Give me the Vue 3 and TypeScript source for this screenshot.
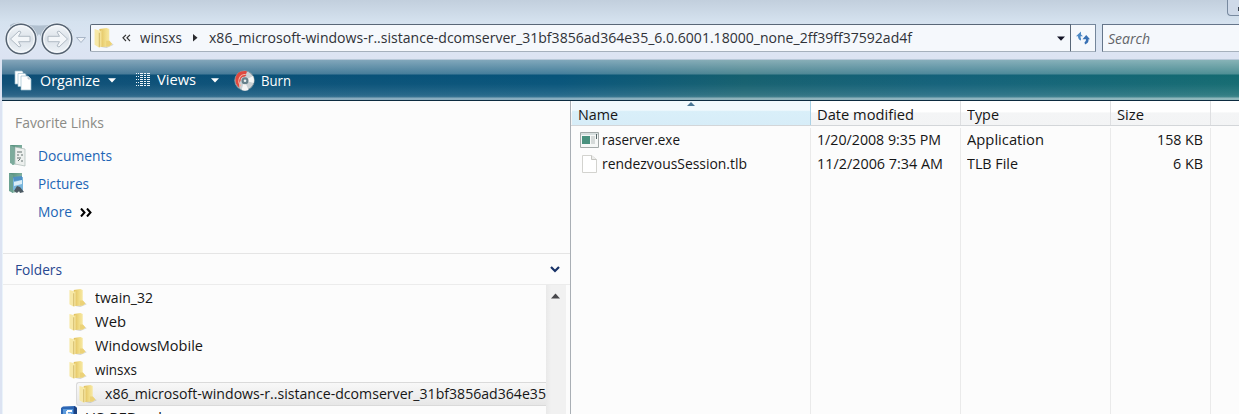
<script setup lang="ts">
import { ref } from 'vue'

// Condenses a label horizontally to the given width in pixels.
const vFit = {
  mounted(el: HTMLElement, binding: { value: number }) {
    const natural = el.getBoundingClientRect().width
    if (!natural) return
    el.style.transform = `scaleX(${binding.value / natural})`
    el.style.marginRight = `${binding.value - natural}px`
  },
}

const folders = ref([
  { name: 'twain_32', width: 58 },
  { name: 'Web', width: 31 },
  { name: 'WindowsMobile', width: 108 },
  { name: 'winsxs', width: 42 },
])

const files = ref([
  { name: 'raserver.exe', nw: 78, date: '1/20/2008 9:35 PM', dw: 124, type: 'Application', tw: 77, size: '158 KB', sw: 46, exe: true },
  { name: 'rendezvousSession.tlb', nw: 145, date: '11/2/2006 7:34 AM', dw: 126, type: 'TLB File', tw: 51, size: '6 KB', sw: 30, exe: false },
])
</script>

<template>
  <div class="window">
    <svg class="defs" width="0" height="0">
      <defs>
        <linearGradient id="gold" x1="0" x2="1"><stop offset="0" stop-color="#e0bf5c" /><stop offset=".5" stop-color="#f2de8a" /><stop offset="1" stop-color="#faf0bc" /></linearGradient>
        <linearGradient id="gold2" x1="0" x2="1"><stop offset="0" stop-color="#fcf2b8" /><stop offset="1" stop-color="#e8cb6c" /></linearGradient>
        <linearGradient id="ring" x2="0" y2="1"><stop offset="0" stop-color="#f3f6f9" /><stop offset=".5" stop-color="#dbe2e9" /><stop offset="1" stop-color="#eef3f8" /></linearGradient>
        <linearGradient id="green" x2="1" y2="1"><stop offset="0" stop-color="#4f8a78" /><stop offset="1" stop-color="#a8cfc0" /></linearGradient>
        <symbol id="folder" viewBox="0 0 20 20">
          <path d="M5 18 15 13 19.700 16.500 13 19.500Z" fill="#8c8c86" opacity=".35" />
          <path d="M6 1.500 13 .500 15.500 1.500v11l3 3.500-3 2-7.500.500Z" fill="url(#gold)" />
          <path d="M12.500 12.500h3.200l2.600 3.300-2.800 2-3 .2Z" fill="#ecd278" />
          <path d="M1.500 1.500 6.500 3l1 15.300L6 19.200 1.500 16.500Z" fill="#f7e8a6" />
          <path d="M5.800 4 8.500 2.500 9 17l-3.200 2.200Z" fill="url(#gold2)" />
          <path d="M6 5v13.500" stroke="#b99739" stroke-width=".6" />
        </symbol>
      </defs>
    </svg>

    <header class="titlebar"><span class="caption-button"><i></i></span></header>

    <nav class="nav">
      <svg class="travel" width="90" height="36" viewBox="0 0 90 36">
        <path d="M10 4Q16 0 24 3Q39 6 54 3Q64 0 72 10L66 24 46 21 39 13 32 21 10 24Z" fill="#9caebd" opacity=".65" />
        <g v-for="x in [21, 57]" :key="x">
          <circle :cx="x" cy="18" r="16" fill="none" stroke="#edf3f9" stroke-width="1" />
          <circle :cx="x" cy="18" r="14.800" fill="url(#ring)" stroke="#566372" stroke-width="1.500" />
          <circle :cx="x" cy="18" r="13.200" fill="none" stroke="#f8fafc" stroke-width="1" />
        </g>
        <path d="M10.500 18 19 10l2 1-2.500 4.300H30v5.400H18.500L21 25l-2 1Z" fill="#f3f6f9" stroke="#b0bac4" />
        <path d="M67.500 18 59 10l-2 1 2.500 4.300H48v5.400h11.500L57 25l2 1Z" fill="#f3f6f9" stroke="#b0bac4" />
        <path d="M76.500 16.500h9l-4.500 5Z" fill="#eef2f8" stroke="#a9b6c7" />
      </svg>
      <div class="address">
        <svg class="addr-folder" width="21" height="22"><use href="#folder" width="21" height="22" /></svg>
        <svg class="chevrons" width="9" height="8"><path d="m4 .8-3 3L4 7M8 .8l-3 3L8 7" fill="none" stroke="#333" stroke-width="1.200" /></svg>
        <span v-fit="42" class="label crumb">winsxs</span>
        <svg class="crumb-arrow" width="5" height="8"><path d="m0 0 4.500 3.800L0 7.600Z" fill="#2a2a2e" /></svg>
        <span v-fit="703" class="label crumb">x86_microsoft-windows-r..sistance-dcomserver_31bf3856ad364e35_6.0.6001.18000_none_2ff39ff37592ad4f</span>
        <svg class="drop" width="8" height="5"><path d="M0 .5h8L4 4.700Z" fill="#121225" /></svg>
      </div>
      <div class="refresh">
        <svg width="14" height="14" viewBox="0 0 14 14">
          <path d="M5 .500 0 5.200h2Q2 8.500 5 9.500V7.500Q4.300 6.500 4.600 5.200H7L5 3.500Z" fill="#4d89c5" />
          <path d="M9 13.500Q13 12 12.500 8.300H14L10.200 4 6.500 8.300H10q.3 2-1.500 3Z" fill="#3971b4" />
        </svg>
      </div>
      <div class="search"><span v-fit="42" class="label">Search</span></div>
    </nav>

    <div class="toolbar">
      <div class="tool organize">
        <svg width="19" height="21" viewBox="0 0 19 21">
          <g fill="#fff" stroke="#9fc0d0" stroke-width=".7"><path d="M1 1h7l1 1v12H1Z" /><path d="M4 3.500h7l1 1v12H4Z" /><path d="M7 6h7l3 3v11H7Z" /></g>
          <path d="M14 6v3h3" fill="#d6e0e6" stroke="#9fb4bf" stroke-width=".6" />
        </svg>
        <span v-fit="60" class="label">Organize</span>
        <svg class="tool-arrow" width="8" height="5"><path d="M0 .3h8L4 4.600Z" fill="#fff" /></svg>
      </div>
      <div class="tool views">
        <svg width="14" height="14" viewBox="0 0 14 14" fill="#eef6fa"><path d="M0 0h1v1H0zM0 3h1v1H0zM0 6h1v1H0zM0 9h1v1H0zM0 12h1v1H0zM2 0h1v1H2zM2 3h1v1H2zM2 6h1v1H2zM2 9h1v1H2zM2 12h1v1H2z" /><g v-for="r in 7" :key="r"><path :d="`M4 ${r * 2 - 2}h3v1H4zM8 ${r * 2 - 2}h2v1H8zM11 ${r * 2 - 2}h3v1h-3z`" /></g></svg>
        <span v-fit="39" class="label">Views</span>
        <svg class="tool-arrow" width="8" height="5"><path d="M0 .3h8L4 4.600Z" fill="#fff" /></svg>
      </div>
      <div class="tool burn">
        <svg width="21" height="21" viewBox="0 0 21 21">
          <circle cx="10.500" cy="10.500" r="9.700" fill="#cbd1d4" stroke="#84989f" />
          <path d="M10.500 10.500 19 6a10 10 0 0 1 .8 7Z" fill="#f5f6f5" /><path d="m10.500 10.500-3 9.500a9 9 0 0 0 7 .1Z" fill="#f4f4f4" />
          <path d="M12.500 1Q3 0 1.500 8q-1 6 4 10-1-5 1-7-.2-3 2-4 3 0 4-2l-2-.5q3-1 2-3.500Z" fill="#df493f" />
          <path d="M7 16Q3 12 6 7q2-3 5-2.500" fill="none" stroke="#f4b5a5" stroke-width="1.100" />
          <circle cx="11" cy="10.700" r="3.500" fill="#68818b" /><circle cx="11" cy="10.700" r="1.300" fill="#eef1f2" />
        </svg>
        <span v-fit="30" class="label">Burn</span>
      </div>
    </div>

    <main class="body">
      <aside class="sidebar">
        <section class="favorites">
          <h2><span v-fit="89" class="label">Favorite Links</span></h2>
          <div class="link">
            <svg width="20" height="24" viewBox="0 0 20 24"><path d="M2 1 14 1v18L4 21Z" fill="url(#green)" /><path d="M7 3 17 5v17l-10-2Z" fill="#edf0ee" stroke="#abb9b4" stroke-width=".7" /><path d="M9 8h5M9 11h2m2 0h2M9 14h4m-3 3 2-2m1 2h2" stroke="#63716f" /><path d="M2 1 6 3v18l-4-2Z" fill="#7cab9c" /></svg>
            <span v-fit="74" class="label">Documents</span>
          </div>
          <div class="link">
            <svg width="20" height="24" viewBox="0 0 20 24"><path d="M1 1 14 1v18L4 21Z" fill="url(#green)" /><path d="m5 6 10-1v14L5 18Z" fill="#78b5dc" /><path d="m5 5 9-1v4L6 9Z" fill="#4f90c4" /><path d="m6 10 8-2v4l-8 2Z" fill="#d9edf7" /><path d="m6 19 3-5 3 1 4 5-4 1-1-2-2 2Z" fill="#4d5a63" /><path d="M1 1 5 3v18l-4-2Z" fill="#6ba292" /></svg>
            <span v-fit="51" class="label">Pictures</span>
          </div>
          <div class="link more">
            <span v-fit="34" class="label">More</span>
            <svg width="12" height="9" fill="none" stroke="#000" stroke-width="2"><path d="m1 .5 3.500 4L1 8.500M7 .5l3.500 4-3.500 4" /></svg>
          </div>
        </section>
        <div class="folders-head">
          <span v-fit="47" class="label">Folders</span>
          <svg width="10" height="7"><path d="m1 1 4 4 4-4" fill="none" stroke="#173267" stroke-width="2.200" /></svg>
        </div>
        <div class="tree-wrap">
          <div class="tree">
            <div v-for="f in folders" :key="f.name" class="node">
              <svg width="19" height="20"><use href="#folder" width="19" height="20" /></svg>
              <span v-fit="f.width" class="label">{{ f.name }}</span>
            </div>
            <div class="node selected">
              <svg width="19" height="20"><use href="#folder" width="19" height="20" /></svg>
              <span v-fit="441" class="label">x86_microsoft-windows-r..sistance-dcomserver_31bf3856ad364e35</span>
            </div>
            <div class="node drive">
              <svg width="17" height="22" viewBox="0 0 17 22"><path d="M0 2 2 .500 14 0l2 2v20H0Z" fill="#2d66b4" /><path d="m13 0 3 2v20h-3Z" fill="#1c4282" /><path d="M2 3h10v14H2Z" fill="#5c9bdc" /><path d="M6 5h5M6 5v9M6 8.500h4" fill="none" stroke="#fff" stroke-width="1.800" /></svg>
              <span v-fit="77" class="label">US-RED_ad</span>
            </div>
          </div>
          <div class="scrollbar"><svg width="9" height="6"><path d="M0 5.500h9L4.500.500Z" fill="#48484c" /></svg></div>
        </div>
      </aside>

      <section class="listing">
        <div class="row head">
          <div class="cell sorted"><svg class="sort" width="8" height="4"><path d="M0 4h8L4 0Z" fill="#4b7795" /></svg><span v-fit="40" class="label">Name</span></div>
          <div class="cell"><span v-fit="97" class="label">Date modified</span></div>
          <div class="cell"><span v-fit="32" class="label">Type</span></div>
          <div class="cell"><span v-fit="27" class="label">Size</span></div>
          <div class="cell"></div>
        </div>
        <div class="files">
          <div v-for="f in files" :key="f.name" class="row file">
            <div class="cell name">
              <svg v-if="f.exe" width="20" height="18" viewBox="0 0 20 18"><path d="M.500 1.500h18v15H.500Z" fill="#f6f8f7" stroke="#a3aaa9" /><path d="M1 2h17v2H1Z" fill="#d7dfdf" /><path d="M2 5h8v8H2Z" fill="#49917e" /><path d="M11 5h4v8h-4Z" fill="#d5dad9" /><path d="M16.500 3v5" stroke="#536466" /></svg>
              <svg v-else width="20" height="20" viewBox="0 0 20 20"><path d="M2.500 1.500h9l5 4v13h-14Z" fill="#fff" stroke="#d3d3cf" /><path d="M11.500 1.500v4h5" fill="#ededeb" stroke="#c5c5c1" /></svg>
              <span v-fit="f.nw" class="label">{{ f.name }}</span>
            </div>
            <div class="cell"><span v-fit="f.dw" class="label">{{ f.date }}</span></div>
            <div class="cell"><span v-fit="f.tw" class="label">{{ f.type }}</span></div>
            <div class="cell size"><span v-fit="f.sw" class="label">{{ f.size }}</span></div>
            <div class="cell"></div>
          </div>
          <div class="row filler"><div v-for="n in 5" :key="n" class="cell"></div></div>
        </div>
      </section>
    </main>
  </div>
</template>

<style>
html, body { margin: 0; overflow: hidden; }
</style>

<style scoped>
* { box-sizing: border-box; }
.window { width: 1239px; height: 414px; overflow: hidden; display: flex; flex-direction: column; font: 14.5px/20px "Open Sans", "Noto Sans", sans-serif; color: #161616; background: linear-gradient(#c2cfdd 0, #d5e2ef 22px, #dce5f3 45px, #dce3f2 60px); }
.defs { position: absolute; }
svg { flex: none; display: block; }
.label { display: inline-block; flex: none; white-space: nowrap; transform-origin: left center; }
.titlebar { height: 24px; flex: none; display: flex; justify-content: flex-end; }
.caption-button { width: 12px; height: 16px; border: 1px solid #77899f; border-width: 0 0 1px 1px; border-bottom-left-radius: 4px; background: #ced9e8; display: flex; justify-content: flex-end; align-items: flex-end; padding-bottom: 4px; }
.caption-button i { width: 1px; height: 4px; background: #3c4654; }
.nav { height: 35px; flex: none; display: flex; align-items: flex-start; }
.travel { margin-top: -3px; }
.address { flex: none; width: 981px; height: 28px; border: 1px solid #596778; border-bottom-color: #a5b0bc; border-radius: 2px 0 0 2px; background: #f5f8fc; display: flex; align-items: center; color: #303238; }
.addr-folder { margin-left: 2px; }
.chevrons { margin: 0 9px 0 8px; }
.crumb-arrow { margin: 0 11px; }
.drop { margin-left: auto; margin-right: 5px; }
.refresh { flex: none; width: 25px; height: 28px; border: 1px solid #74869b; border-left: 0; border-bottom-color: #a5b0bc; background: #f5f8fc; display: grid; place-items: center; }
.search { flex: none; margin-left: 6px; width: 140px; height: 28px; border: 1px solid #65758a; border-bottom-color: #a5b0bc; background: #f5f8fc; padding: 4px 5px; font-style: italic; color: #626468; }
.toolbar { height: 42px; flex: none; margin-left: 2px; padding-top: 1px; display: flex; align-items: center; color: #fff; border-top: 1px solid #b7c8d8; border-bottom: 1px solid #0c2b40; background: linear-gradient(rgba(255,255,255,.49) 0, rgba(255,255,255,.25) 14px, rgba(255,255,255,0) 15px, rgba(255,255,255,.02) 24px, rgba(255,255,255,.13) 35px, rgba(255,255,255,.2) 37px, rgba(255,255,255,.52) 38px, rgba(255,255,255,.52) 40px), linear-gradient(90deg, #0d4e76, #07547a 45%, #15606f 60%, #13617a 76%, #146b71); }
.tool { display: flex; align-items: center; height: 28px; }
.organize { margin-left: 12px; }
.organize .label { margin-left: 7px; }
.tool-arrow { margin-left: 8px; }
.views { margin-left: 20px; }
.views svg:first-child { margin-top: -2px; }
.views .label { margin-left: 7px; margin-top: -1px; }
.views .tool-arrow { margin-left: 15px; }
.burn { margin-left: 15px; }
.burn .label { margin-left: 6px; }
.body { display: flex; flex: 1; min-height: 0; margin-left: 2px; border-left: 1px solid #eaf3fa; background: #fcfcfc; }
.sidebar { width: 568px; border-right: 1px solid #a9afb5; display: flex; flex-direction: column; }
.favorites { height: 153px; flex: none; border-bottom: 1px solid #e5e5e5; padding-top: 12px; }
h2 { margin: 0 0 9px 12px; font: inherit; color: #8b8b86; }
.link { height: 28px; display: flex; align-items: center; color: #1d65b5; padding-left: 5px; }
.link .label { margin-left: 10px; }
.more .label { margin-left: 30px; }
.more svg { margin-left: 8px; }
.folders-head { height: 31px; flex: none; display: flex; align-items: center; justify-content: space-between; padding: 1px 10px 0 12px; color: #284890; border-bottom: 1px solid #ececec; }
.tree-wrap { display: flex; flex: 1; min-height: 0; overflow: hidden; }
.tree { width: 543px; padding-top: 1px; overflow: hidden; }
.node { height: 24px; padding-left: 65px; display: flex; align-items: center; }
.node .label { margin-left: 8px; }
.selected { margin-left: 73px; padding-left: 1px; border: 1px solid #dadada; border-right: 0; border-radius: 3px 0 0 3px; background: linear-gradient(#f8f8f8, #e7e7e7); }
.drive { padding-left: 58px; }
.drive svg { margin-top: -3px; }
.drive .label { margin-left: 7px; }
.scrollbar { width: 20px; background: linear-gradient(90deg, #e9e9e9, #f1f1f1 5px); display: flex; justify-content: center; padding: 8px 2px 0 0; }
.listing { flex: 1; display: flex; flex-direction: column; }
.row { display: grid; grid-template-columns: 240px 150px 150px 100px 1fr; }
.cell { display: flex; align-items: center; padding-left: 6px; border-right: 1px solid #eaeaea; min-width: 0; }
.cell:last-child { border-right: 0; }
.head { height: 25px; flex: none; border-bottom: 1px solid #d3d6d9; background: linear-gradient(#fff 45%, #f4f5f6 50%, #f3f4f5); }
.head .cell { border-color: #dedfe1; padding-top: 3px; }
.head .sorted { position: relative; margin-left: 1px; border-color: #a9d1e6; background: linear-gradient(#f1f9fd 38%, #d9eff9 44%, #d7edf8); }
.sort { position: absolute; left: 115px; top: 1px; }
.files { flex: 1; display: flex; flex-direction: column; padding-top: 2px; }
.file { height: 24px; flex: none; }
.name { padding-left: 9px; }
.name .label { margin-left: 2px; }
.size { justify-content: flex-end; padding-right: 7px; }
.filler { flex: 1; }
</style>
